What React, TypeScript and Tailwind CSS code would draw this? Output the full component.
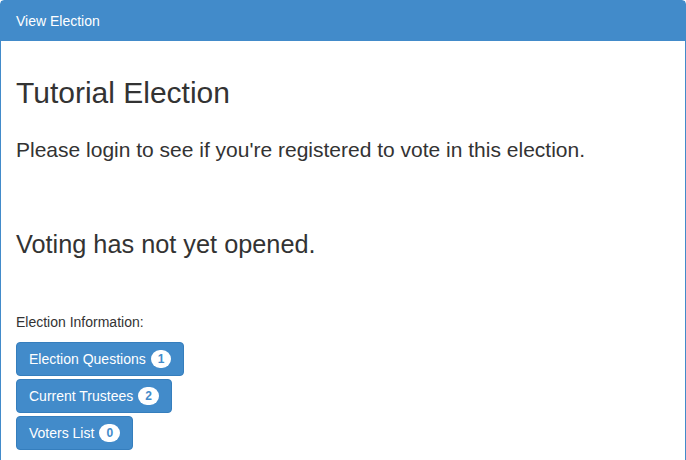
import React from 'react';

const infoLinks = [
  { label: 'Election Questions', count: 1 },
  { label: 'Current Trustees', count: 2 },
  { label: 'Voters List', count: 0 },
];

const App: React.FC = () => {
  return (
    <div className="w-[686px] h-[460px] overflow-hidden bg-white text-[#333] font-['Liberation_Sans',Arial,sans-serif]">
      <div className="border border-[#428bca] rounded-t-[4px] min-h-[480px]">
        {/* Panel heading */}
        <div className="bg-[#428bca] text-white px-[15px] pt-[10px] pb-[10px] text-[14px] leading-[20px]">
          View Election
        </div>

        {/* Panel body */}
        <div className="px-[15px] pt-[15px]">
          <h1 className="mt-[20px] text-[30px] leading-[33px] font-normal">Tutorial Election</h1>
          <p className="mt-[30px] text-[21px] leading-[22px]">
            Please login to see if you're registered to vote in this election.
          </p>
          <h3 className="mt-[69px] text-[25.3px] leading-[29px] font-normal">Voting has not yet opened.</h3>

          <p className="mt-[53px] text-[14px] leading-[20px]">Election Information:</p>
          <div className="mt-[10px] flex flex-col items-start gap-[3px]">
            {infoLinks.map((l) => (
              <button
                key={l.label}
                className="h-[34px] flex items-center gap-[5px] px-[12px] bg-[#428bca] border border-[#357ebd] rounded-[4px] text-white text-[14px] leading-[20px]"
              >
                {l.label}
                <span className="inline-flex items-center justify-center h-[18px] min-w-[20px] px-[7px] rounded-full bg-white text-[#428bca] text-[12px] font-bold leading-none">
                  {l.count}
                </span>
              </button>
            ))}
          </div>
        </div>
      </div>
    </div>
  );
};

export default App;
